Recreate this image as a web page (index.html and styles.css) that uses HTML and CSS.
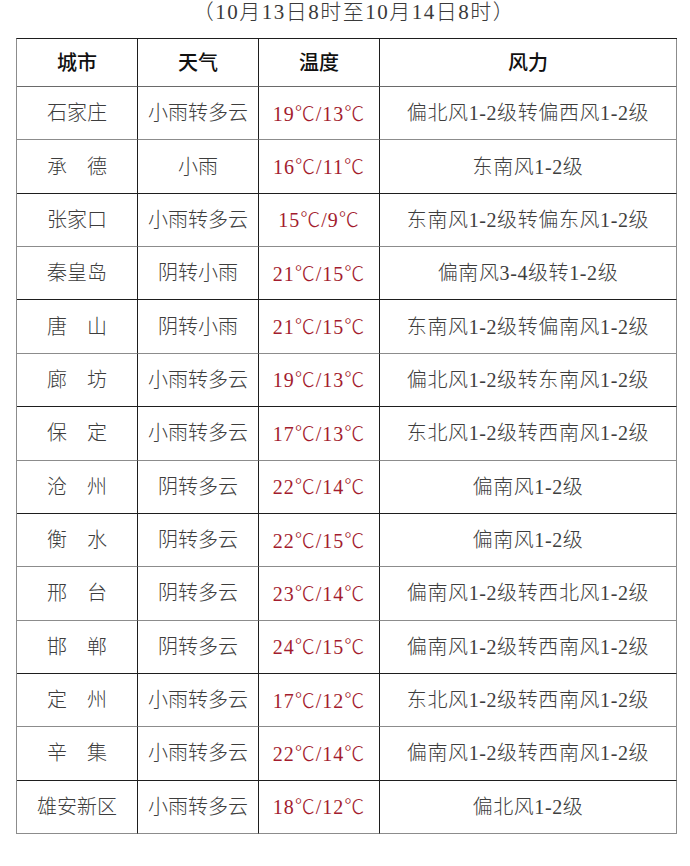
FILE: index.html
```html
<!DOCTYPE html>
<html lang="zh-CN">
<head>
<meta charset="utf-8">
<title>河北天气预报</title>
<link rel="stylesheet" href="styles.css">
</head>
<body>
<div class="page">
  <div class="title">（10月13日8时至10月14日8时）</div>
  <table class="wx">
    <colgroup>
      <col class="c1"><col class="c2"><col class="c3"><col class="c4">
    </colgroup>
    <thead>
      <tr class="head m"><th>城市</th><th>天气</th><th>温度</th><th>风力</th></tr>
    </thead>
    <tbody>
      <tr class="g"><td>石家庄</td><td>小雨转多云</td><td class="t">19<span class="deg">℃</span>/13<span class="deg">℃</span></td><td class="w">偏北风1-2级转偏西风1-2级</td></tr>
      <tr class="d"><td>承　德</td><td>小雨</td><td class="t">16<span class="deg">℃</span>/11<span class="deg">℃</span></td><td class="w">东南风1-2级</td></tr>
      <tr class="g"><td>张家口</td><td>小雨转多云</td><td class="t">15<span class="deg">℃</span>/9<span class="deg">℃</span></td><td class="w">东南风1-2级转偏东风1-2级</td></tr>
      <tr class="d"><td>秦皇岛</td><td>阴转小雨</td><td class="t">21<span class="deg">℃</span>/15<span class="deg">℃</span></td><td class="w">偏南风3-4级转1-2级</td></tr>
      <tr class="g"><td>唐　山</td><td>阴转小雨</td><td class="t">21<span class="deg">℃</span>/15<span class="deg">℃</span></td><td class="w">东南风1-2级转偏南风1-2级</td></tr>
      <tr class="d"><td>廊　坊</td><td>小雨转多云</td><td class="t">19<span class="deg">℃</span>/13<span class="deg">℃</span></td><td class="w">偏北风1-2级转东南风1-2级</td></tr>
      <tr class="g"><td>保　定</td><td>小雨转多云</td><td class="t">17<span class="deg">℃</span>/13<span class="deg">℃</span></td><td class="w">东北风1-2级转西南风1-2级</td></tr>
      <tr class="d"><td>沧　州</td><td>阴转多云</td><td class="t">22<span class="deg">℃</span>/14<span class="deg">℃</span></td><td class="w">偏南风1-2级</td></tr>
      <tr class="g"><td>衡　水</td><td>阴转多云</td><td class="t">22<span class="deg">℃</span>/15<span class="deg">℃</span></td><td class="w">偏南风1-2级</td></tr>
      <tr class="g"><td>邢　台</td><td>阴转多云</td><td class="t">23<span class="deg">℃</span>/14<span class="deg">℃</span></td><td class="w">偏南风1-2级转西北风1-2级</td></tr>
      <tr class="d"><td>邯　郸</td><td>阴转多云</td><td class="t">24<span class="deg">℃</span>/15<span class="deg">℃</span></td><td class="w">偏南风1-2级转西南风1-2级</td></tr>
      <tr class="g"><td>定　州</td><td>小雨转多云</td><td class="t">17<span class="deg">℃</span>/12<span class="deg">℃</span></td><td class="w">东北风1-2级转西南风1-2级</td></tr>
      <tr class="d"><td>辛　集</td><td>小雨转多云</td><td class="t">22<span class="deg">℃</span>/14<span class="deg">℃</span></td><td class="w">偏南风1-2级转西南风1-2级</td></tr>
      <tr class="g"><td>雄安新区</td><td>小雨转多云</td><td class="t">18<span class="deg">℃</span>/12<span class="deg">℃</span></td><td class="w">偏北风1-2级</td></tr>
    </tbody>
  </table>
</div>
</body>
</html>
```

FILE: styles.css
```css
html, body {
  margin: 0;
  padding: 0;
  background: #ffffff;
}

body {
  font-family: "Liberation Serif", "Noto Sans CJK SC", serif;
  color: #3d3d3d;
}

.page {
  width: 690px;
  padding: 0 0 0 16px;
  box-sizing: border-box;
}

.title {
  width: 660px;
  padding-left: 16px;
  box-sizing: border-box;
  text-align: center;
  font-size: 21px;
  letter-spacing: 1.5px;
  line-height: 24px;
  height: 38px;
  font-weight: 300;
  color: #3a3a3a;
}

.wx {
  width: 660px;
  table-layout: fixed;
  border-collapse: separate;
  border-spacing: 0;
  border-top: 1px solid #1e1e1e;
  border-left: 1px solid #8c8c8c;
}

.c1, .c2, .c3 { width: 121px; }
.c4 { width: 297px; }

.wx th,
.wx td {
  padding: 0;
  text-align: center;
  vertical-align: middle;
  font-size: 20px;
  line-height: 24px;
  white-space: nowrap;
  border-right: 1px solid #1e1e1e;
  border-bottom: 1px solid #8c8c8c;
}

.wx th:last-child,
.wx td:last-child {
  border-right-color: #8c8c8c;
}

.wx th {
  font-weight: 500;
  color: #111111;
}

.wx td {
  font-weight: 300;
}

.head { height: 48px; }
.wx tbody tr { height: 53.36px; }

.wx tr.m th { border-bottom-color: #6a6a6a; }
.wx tr.d td { border-bottom-color: #1e1e1e; }
.wx tr.g td { border-bottom-color: #8c8c8c; }

.wx td.t {
  color: #a31c2e;
  letter-spacing: 1px;
}

.deg {
  font-family: "Noto Sans CJK SC", sans-serif;
  font-weight: 300;
}

.wx td.w {
  letter-spacing: 0.6px;
}
```
